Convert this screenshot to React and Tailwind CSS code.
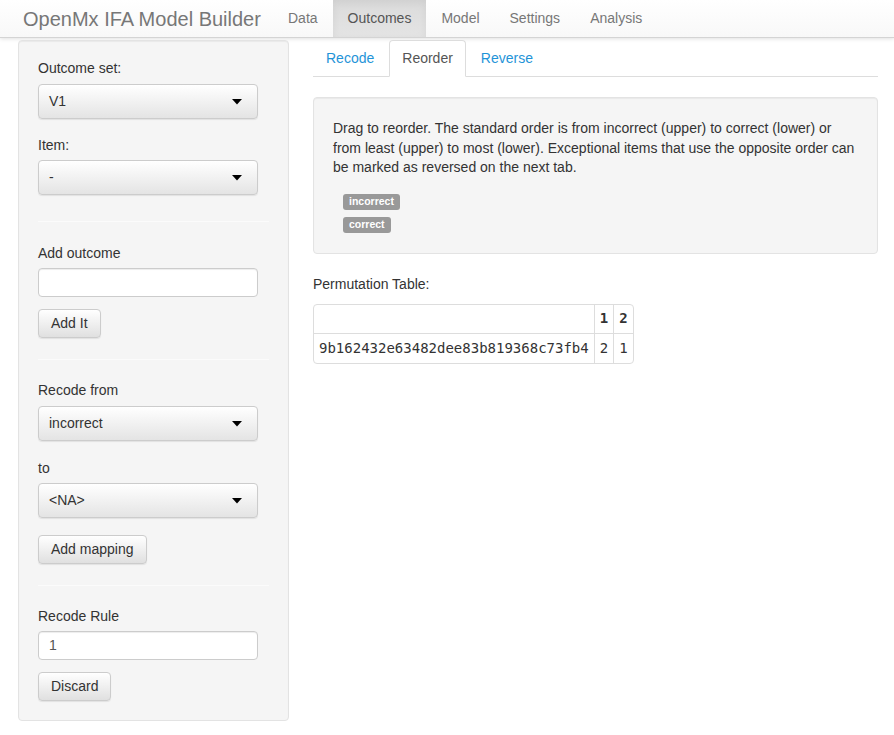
const font = { fontFamily: '"Liberation Sans", Arial, sans-serif' };

const Caret = () => (
  <svg width="10" height="6" viewBox="0 0 10 6" className="shrink-0">
    <path d="M0 0 L10 0 L5 5.5 Z" fill="#000" />
  </svg>
);

const Select = ({ value, className = "" }) => (
  <div
    className={`flex h-[35px] w-[220px] items-center justify-between rounded-[4px] border border-[#cccccc] bg-gradient-to-b from-white to-[#e4e4e4] pl-[10px] pr-[15px] text-[14px] text-[#333] shadow-[0_1px_1px_rgba(0,0,0,0.08)] ${className}`}
  >
    <span>{value}</span>
    <Caret />
  </div>
);

const Button = ({ children, className = "" }) => (
  <button
    className={`flex h-[29px] items-center rounded-[4px] border border-[#cccccc] bg-gradient-to-b from-white to-[#e0e0e0] px-[12px] text-[14px] text-[#333] shadow-[0_1px_1px_rgba(0,0,0,0.08)] ${className}`}
  >
    {children}
  </button>
);

const Input = ({ value = "", className = "" }) => (
  <div
    className={`flex h-[29px] w-[220px] items-center rounded-[4px] border border-[#cccccc] bg-white px-[10px] text-[14px] text-[#555] shadow-[inset_0_1px_1px_rgba(0,0,0,0.075)] ${className}`}
  >
    {value}
  </div>
);

const Label = ({ children, className = "" }) => (
  <div className={`h-[20px] text-[14px] leading-[20px] text-[#333] ${className}`}>{children}</div>
);

const Rule = ({ className = "" }) => (
  <div className={`w-full border-t border-[#fbfbfb] ${className}`} />
);

const navItems = ["Data", "Outcomes", "Model", "Settings", "Analysis"];

export default function App() {
  return (
    <div className="min-h-[735px] bg-white text-[#333]" style={font}>
      {/* Navbar */}
      <div className="flex h-[38px] items-stretch border-b border-[#d4d4d4] bg-gradient-to-b from-white to-[#f8f8f8] shadow-[0_1px_4px_rgba(0,0,0,0.12)]">
        <div className="flex w-[273px] items-center pl-[23px] text-[20px] text-[#777]">
          OpenMx IFA Model Builder
        </div>
        {navItems.map((item) => (
          <div
            key={item}
            className={
              item === "Outcomes"
                ? "flex items-center bg-gradient-to-b from-[#dbdbdb] to-[#e4e4e4] px-[15px] text-[14px] text-[#555] shadow-[inset_0_3px_9px_rgba(0,0,0,0.06)]"
                : "flex items-center px-[15px] text-[14px] text-[#777]"
            }
          >
            {item}
          </div>
        ))}
      </div>

      <div className="flex items-start pt-[2px] pl-[18px] pr-[16px]">
        {/* Sidebar */}
        <div className="w-[271px] shrink-0 rounded-[4px] border border-[#e3e3e3] bg-[#f5f5f5] px-[19px] pt-[17px] pb-[19px] shadow-[inset_0_1px_1px_rgba(0,0,0,0.05)]">
          <Label>Outcome set:</Label>
          <Select value="V1" className="mt-[6px]" />
          <Label className="mt-[16px]">Item:</Label>
          <Select value="-" className="mt-[5px]" />
          <Rule className="mt-[26px]" />
          <Label className="mt-[21px]">Add outcome</Label>
          <Input className="mt-[5px]" />
          <Button className="mt-[12px]">Add It</Button>
          <Rule className="mt-[21px]" />
          <Label className="mt-[20px]">Recode from</Label>
          <Select value="incorrect" className="mt-[6px]" />
          <Label className="mt-[17px]">to</Label>
          <Select value="<NA>" className="mt-[5px]" />
          <Button className="mt-[17px]">Add mapping</Button>
          <Rule className="mt-[21px]" />
          <Label className="mt-[20px]">Recode Rule</Label>
          <Input value="1" className="mt-[5px]" />
          <Button className="mt-[12px]">Discard</Button>
        </div>

        {/* Main */}
        <div className="ml-[24px] flex-1">
          <div className="flex border-b border-[#dddddd]">
            <div className="-mb-px mr-[2px] flex h-[37px] items-center border border-transparent px-[12px] text-[14px] text-[#1f94d8]">
              Recode
            </div>
            <div className="-mb-px mr-[2px] flex h-[37px] items-center rounded-t-[4px] border border-[#dddddd] border-b-white bg-white px-[12px] text-[14px] text-[#555]">
              Reorder
            </div>
            <div className="-mb-px flex h-[37px] items-center border border-transparent px-[12px] text-[14px] text-[#1f94d8]">
              Reverse
            </div>
          </div>

          <div className="mt-[20px] rounded-[4px] border border-[#e3e3e3] bg-[#f5f5f5] px-[19px] pt-[21px] pb-[20px] shadow-[inset_0_1px_1px_rgba(0,0,0,0.05)]">
            <p className="text-[14px] leading-[19.5px] text-[#333]">
              Drag to reorder. The standard order is from incorrect (upper) to correct (lower) or
              from least (upper) to most (lower). Exceptional items that use the opposite order can
              be marked as reversed on the next tab.
            </p>
            <div className="mt-[16px] flex flex-col items-start gap-[7px] pl-[10px]">
              <span className="flex h-[16px] items-center rounded-[3px] bg-[#999] px-[6px] text-[10.5px] font-bold text-white">
                incorrect
              </span>
              <span className="flex h-[16px] items-center rounded-[3px] bg-[#999] px-[6px] text-[10.5px] font-bold text-white">
                correct
              </span>
            </div>
          </div>

          <div className="mt-[20px] h-[20px] text-[14px] leading-[20px]">Permutation Table:</div>

          <div className="mt-[10px] inline-block overflow-hidden rounded-[4px] border border-[#dddddd]">
            <table
              className="border-collapse text-[14px] text-[#333]"
              style={{ fontFamily: '"DejaVu Sans Mono", monospace' }}
            >
              <thead>
                <tr className="h-[29px]">
                  <th className="border-r border-[#dddddd] px-[5px]"></th>
                  <th className="border-r border-[#dddddd] px-[5px] text-right font-bold">1</th>
                  <th className="px-[5px] text-right font-bold">2</th>
                </tr>
              </thead>
              <tbody>
                <tr className="h-[29px] border-t border-[#dddddd]">
                  <td className="border-r border-[#dddddd] px-[5px]">9b162432e63482dee83b819368c73fb4</td>
                  <td className="border-r border-[#dddddd] px-[5px] text-right">2</td>
                  <td className="px-[5px] text-right">1</td>
                </tr>
              </tbody>
            </table>
          </div>
        </div>
      </div>
    </div>
  );
}
